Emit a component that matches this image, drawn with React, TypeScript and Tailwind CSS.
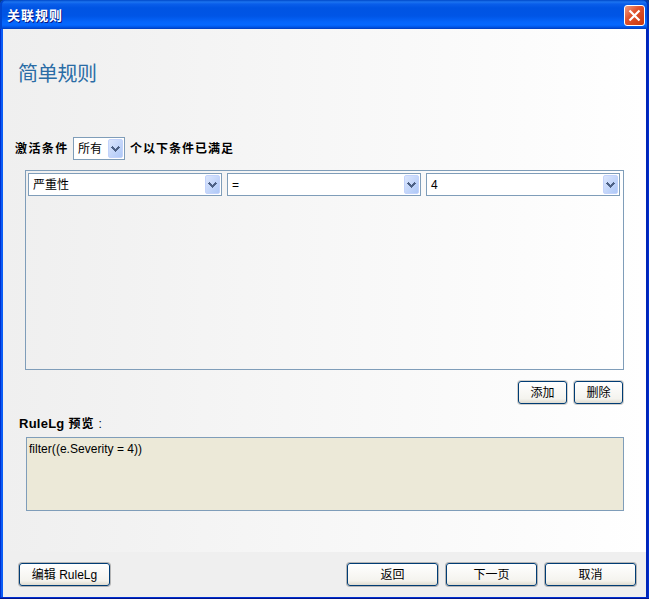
import React from "react";

function Combo({ value, className }: { value: string; className: string }) {
  return (
    <div className={`flex h-[23px] shrink-0 items-center justify-between border border-[#7f9db9] bg-white pr-px pl-[4px] ${className}`}>
      <span className="whitespace-nowrap">{value}</span>
      <span className="flex h-[19px] w-[15px] shrink-0 items-center justify-center rounded-[2px] border border-[#c3d3fb] bg-linear-to-br from-[#dce6fd] to-[#aec8f7] pt-px">
        <svg width="9" height="6" viewBox="0 0 9 6" shapeRendering="crispEdges" fill="#4d6185">
          <path d="M1 0h1v1h1v1h1v1h1v-1h1v-1h1v-1h1v1h1v1h-1v1h-1v1h-1v1h-1v1h-1v-1h-1v-1h-1v-1h-1v-1h-1v-1h1z" />
        </svg>
      </span>
    </div>
  );
}

function Button({ children, className }: { children: React.ReactNode; className: string }) {
  return (
    <button
      className={`flex h-[23px] shrink-0 items-center justify-center rounded-[3px] border border-[#003c74] bg-linear-to-b from-white via-[#f4f3ee] via-80% to-[#dedbd0] whitespace-nowrap ${className}`}
    >
      {children}
    </button>
  );
}

export default function App() {
  return (
    <div className="flex h-[599px] w-[649px] flex-col overflow-hidden bg-[#0a3c8c] font-['Liberation_Sans','Noto_Sans_CJK_SC',sans-serif] text-[12px] leading-[16px] text-black">
      <header className="flex h-[29px] shrink-0 items-center justify-between rounded-t-[5px] bg-[linear-gradient(to_bottom,#0048c8_0px,#1c74f0_2px,#0a5eea_4px,#0054e3_8px,#0055e6_16px,#0565fb_22px,#0568ff_25px,#0056e8_27px,#003cbd_29px)] pt-[2px] pr-[4px] pl-[7px] shadow-[inset_2px_0_0_#0045cf,inset_-2px_0_0_#0033b4]">
        <h1 className="text-[13px] font-bold tracking-[1px] text-white [text-shadow:1px_1px_0_#0a1883]">关联规则</h1>
        <button className="flex size-[21px] items-center justify-center rounded-[3px] border border-white bg-linear-to-br from-[#ec9b80] via-[#e0532d] via-40% to-[#c93808]">
          <svg width="13" height="13" viewBox="0 0 13 13" stroke="white" strokeWidth="2.2">
            <path d="M1.5 1.5l10 10M11.5 1.5l-10 10" />
          </svg>
        </button>
      </header>
      <div className="flex min-h-0 grow border-b border-[#00138c] bg-[#002fd0] pr-px pb-px pl-px">
        <div className="flex min-w-0 grow flex-col border-r-2 border-l-2 border-r-[#0025b8] border-l-[#0a5cf5] bg-[#efefef]">
          <main className="flex h-[523px] shrink-0 flex-col bg-linear-to-r from-[#efefef] to-white">
            <h2 className="mt-[32px] ml-[15px] text-[20px] leading-[26px] tracking-[-0.3px] text-[#2a6ca5]">简单规则</h2>
            <div className="mt-[50px] ml-[12px] flex h-[23px] items-center">
              <span className="w-[58px] font-bold tracking-[1.4px] whitespace-nowrap">激活条件</span>
              <Combo value="所有" className="w-[52px]" />
              <span className="ml-[5px] font-bold tracking-[1px] whitespace-nowrap">个以下条件已满足</span>
            </div>
            <section className="mt-[10px] ml-[22px] flex h-[200px] w-[599px] items-start gap-[5px] border border-[#7f9db9] pt-[2px] pl-[2px]">
              <Combo value="严重性" className="w-[194px]" />
              <Combo value="=" className="w-[194px]" />
              <Combo value="4" className="w-[194px]" />
            </section>
            <div className="mt-[11px] mr-[23px] flex justify-end gap-[7px]">
              <Button className="w-[49px] shadow-[0_0_0_1px_#d2d0cc]">添加</Button>
              <Button className="w-[49px] shadow-[0_0_0_1px_#d2d0cc]">删除</Button>
            </div>
            <div className="mt-[12px] ml-[16px] flex h-[16px] items-center font-bold whitespace-nowrap">
              <span className="text-[13px] tracking-[0.25px]">RuleLg</span>
              <span className="ml-[4px] tracking-[1px]">预览</span>
              <span className="ml-[4px] font-normal">:</span>
            </div>
            <div className="mt-[5px] ml-[23px] h-[74px] w-[598px] border border-[#7f9db9] bg-[#ece9d8] px-[2px] pt-[3px] tracking-[0.03px]">
              filter((e.Severity = 4))
            </div>
          </main>
          <footer className="flex grow items-start pt-[11px] pr-[10px] pl-[16px]">
            <Button className="w-[91px] shadow-[0_0_0_1px_#b5b5b5]">编辑 RuleLg</Button>
            <div className="ml-auto flex gap-[8px]">
              <Button className="w-[91px] shadow-[0_0_0_1px_#b5b5b5]">返回</Button>
              <Button className="w-[91px] shadow-[0_0_0_1px_#b5b5b5]">下一页</Button>
              <Button className="w-[91px] shadow-[0_0_0_1px_#b5b5b5]">取消</Button>
            </div>
          </footer>
        </div>
      </div>
    </div>
  );
}
